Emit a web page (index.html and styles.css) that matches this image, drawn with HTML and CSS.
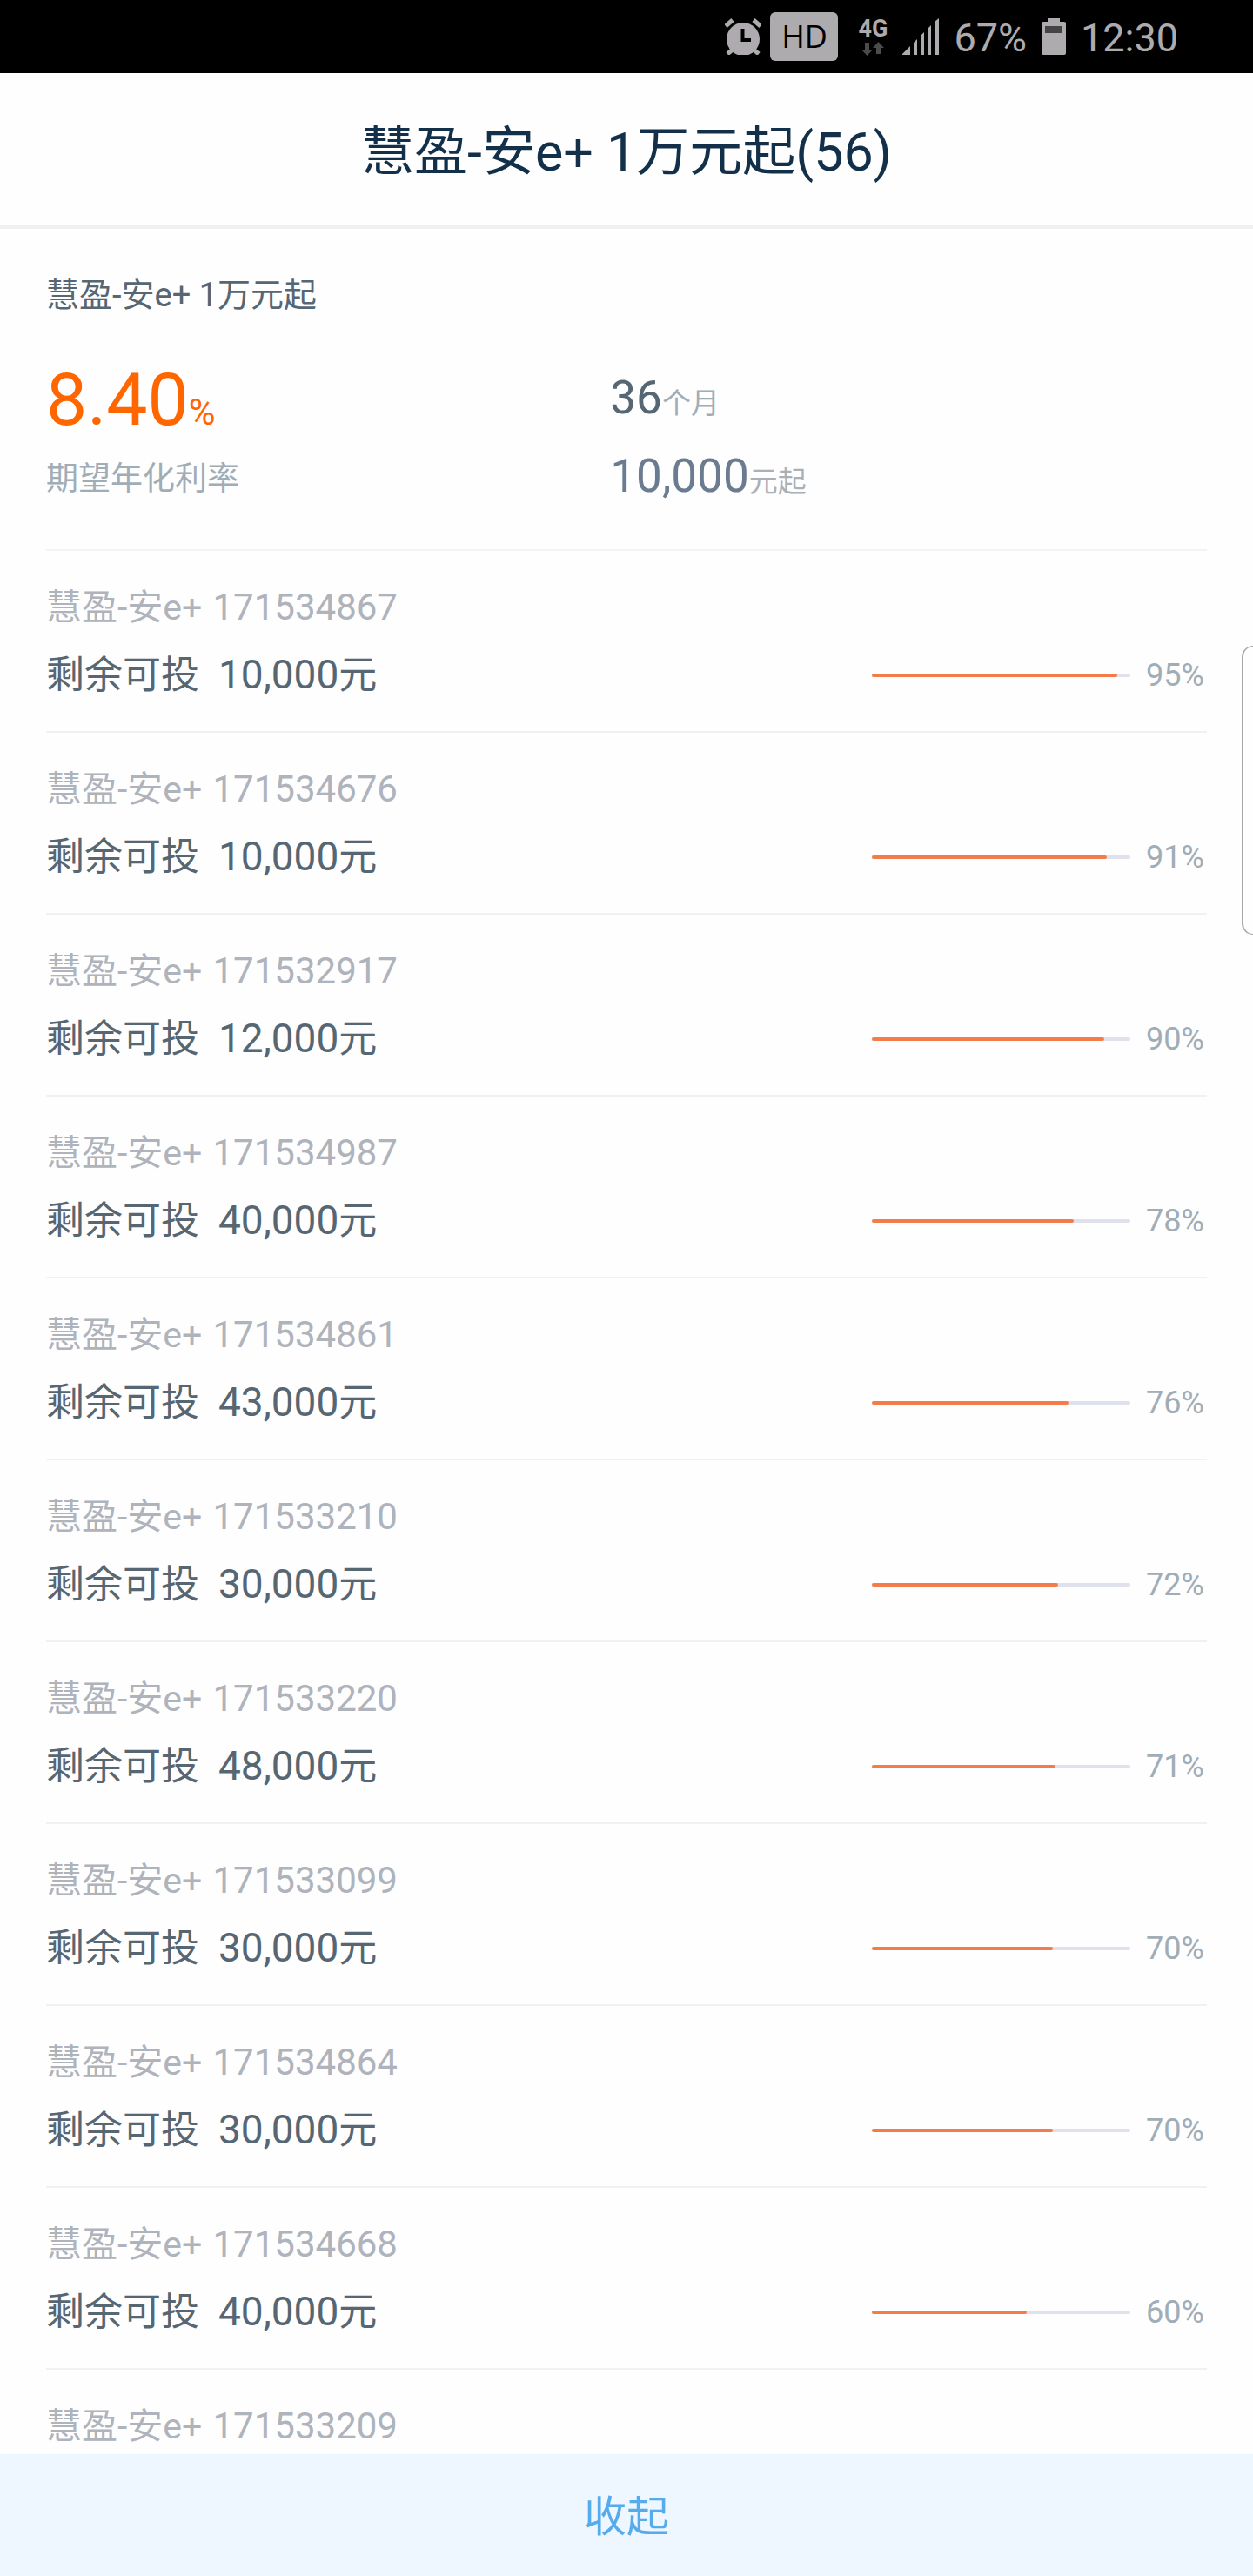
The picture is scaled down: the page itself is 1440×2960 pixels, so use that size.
FILE: index.html
```html
<!DOCTYPE html>
<html lang="zh-CN">
    <head>
        <meta charset="utf-8">
        <meta name="viewport" content="width=device-width, initial-scale=1">
        <title>慧盈-安e+ 1万元起</title>
        <link rel="stylesheet" href="styles.css">
    </head>
    <body>
        <div class="screen">
            <div class="statusbar">
                <div class="status-left">
                    <svg width="42" height="42" viewBox="0 0 42 42">
                        <circle cx="21" cy="24" r="19" fill="#aeabae"/>
                        <path d="M1 9L9 2M41 9L33 2M9 36L3 41M33 36L39 41" stroke="#aeabae" stroke-width="5"/>
                        <path d="M20.500 12V25H30" fill="none" stroke="#000" stroke-width="4"/>
                    </svg>
                    <span class="hd">HD</span>
                </div>
                <div class="network">
                    <span>4G</span>
                    <svg width="26" height="16" viewBox="0 0 26 16">
                        <path d="M4 1H9V9H13L6.500 16L0 9H4Z" fill="#4b4b4b"/>
                        <path d="M17 14H22V7H26L19.500 0L13 7H17Z" fill="#4b4b4b"/>
                    </svg>
                </div>
                <svg width="42" height="42" viewBox="0 0 42 42">
                    <path d="M0 41L9 32V42H0ZM13 28L17 24V42H13ZM21 20L25 16V42H21ZM29 12L33 8V42H29ZM37 4L42 0V42H37Z" fill="#aeabae"/>
                </svg>
                <span class="status-text">67%</span>
                <svg width="28" height="42" viewBox="0 0 28 42">
                    <path d="M7 0H21V4H26Q28 4 28 6V40Q28 42 26 42H2Q0 42 0 40V6Q0 4 2 4H7Z" fill="#aeabae"/>
                    <rect x="4" y="9" width="20" height="8" fill="#444"/>
                </svg>
                <span class="status-text">12:30</span>
            </div>

            <header class="header">
                <h1>慧盈-安e+ 1万元起(56)</h1>
            </header>

            <section class="summary">
                <h2>慧盈-安e+ 1万元起</h2>
                <div class="figures">
                    <div class="rate">
                        <p class="rate-value">8.40<small>%</small></p>
                        <p class="rate-label">期望年化利率</p>
                    </div>
                    <div class="terms">
                        <p class="term">36<small>个月</small></p>
                        <p class="term minimum">10,000<small>元起</small></p>
                    </div>
                </div>
            </section>

            <ul class="list">
                <li class="item">
                    <p class="name">慧盈-安e+ <span class="number">171534867</span></p>
                    <div class="line">
                        <p class="remain">剩余可投<span class="amount">10,000</span>元</p>
                        <div class="bar"><div class="fill" style="width: 95%"></div></div>
                        <span class="percent">95%</span>
                    </div>
                </li>
                <li class="item">
                    <p class="name">慧盈-安e+ <span class="number">171534676</span></p>
                    <div class="line">
                        <p class="remain">剩余可投<span class="amount">10,000</span>元</p>
                        <div class="bar"><div class="fill" style="width: 91%"></div></div>
                        <span class="percent">91%</span>
                    </div>
                </li>
                <li class="item">
                    <p class="name">慧盈-安e+ <span class="number">171532917</span></p>
                    <div class="line">
                        <p class="remain">剩余可投<span class="amount">12,000</span>元</p>
                        <div class="bar"><div class="fill" style="width: 90%"></div></div>
                        <span class="percent">90%</span>
                    </div>
                </li>
                <li class="item">
                    <p class="name">慧盈-安e+ <span class="number">171534987</span></p>
                    <div class="line">
                        <p class="remain">剩余可投<span class="amount">40,000</span>元</p>
                        <div class="bar"><div class="fill" style="width: 78%"></div></div>
                        <span class="percent">78%</span>
                    </div>
                </li>
                <li class="item">
                    <p class="name">慧盈-安e+ <span class="number">171534861</span></p>
                    <div class="line">
                        <p class="remain">剩余可投<span class="amount">43,000</span>元</p>
                        <div class="bar"><div class="fill" style="width: 76%"></div></div>
                        <span class="percent">76%</span>
                    </div>
                </li>
                <li class="item">
                    <p class="name">慧盈-安e+ <span class="number">171533210</span></p>
                    <div class="line">
                        <p class="remain">剩余可投<span class="amount">30,000</span>元</p>
                        <div class="bar"><div class="fill" style="width: 72%"></div></div>
                        <span class="percent">72%</span>
                    </div>
                </li>
                <li class="item">
                    <p class="name">慧盈-安e+ <span class="number">171533220</span></p>
                    <div class="line">
                        <p class="remain">剩余可投<span class="amount">48,000</span>元</p>
                        <div class="bar"><div class="fill" style="width: 71%"></div></div>
                        <span class="percent">71%</span>
                    </div>
                </li>
                <li class="item">
                    <p class="name">慧盈-安e+ <span class="number">171533099</span></p>
                    <div class="line">
                        <p class="remain">剩余可投<span class="amount">30,000</span>元</p>
                        <div class="bar"><div class="fill" style="width: 70%"></div></div>
                        <span class="percent">70%</span>
                    </div>
                </li>
                <li class="item">
                    <p class="name">慧盈-安e+ <span class="number">171534864</span></p>
                    <div class="line">
                        <p class="remain">剩余可投<span class="amount">30,000</span>元</p>
                        <div class="bar"><div class="fill" style="width: 70%"></div></div>
                        <span class="percent">70%</span>
                    </div>
                </li>
                <li class="item">
                    <p class="name">慧盈-安e+ <span class="number">171534668</span></p>
                    <div class="line">
                        <p class="remain">剩余可投<span class="amount">40,000</span>元</p>
                        <div class="bar"><div class="fill" style="width: 60%"></div></div>
                        <span class="percent">60%</span>
                    </div>
                </li>
                <li class="item">
                    <p class="name">慧盈-安e+ <span class="number">171533209</span></p>
                </li>
            </ul>

            <button type="button" class="collapse">收起</button>
            <div class="edge-handle"></div>
        </div>
    </body>
</html>
```
FILE: styles.css
```css
* {
    box-sizing: border-box;
}

body {
    margin: 0;
    background: #fefefe;
    font-family: Roboto, "Noto Sans CJK SC", sans-serif;
    font-weight: 400;
}

h1, h2, p, ul {
    margin: 0;
    padding: 0;
    font-weight: 400;
}

/* keep the mixed sizes from growing the line */
small, .number, .amount {
    line-height: 1;
}

.screen {
    position: relative;
    display: flex;
    flex-direction: column;
    height: 100vh;
    overflow: hidden;
}

/* phone status bar */
.statusbar {
    flex: none;
    display: flex;
    align-items: center;
    justify-content: flex-end;
    gap: 17px;
    height: 84px;
    padding-right: 86px;
    background: #000;
    color: #aeabae;
}

.status-left {
    display: flex;
    align-items: center;
    gap: 10px;
    margin-right: 6px;
}

.hd {
    width: 78px;
    border-radius: 6px;
    background: #aeabae;
    color: #000;
    font-family: "Open Sans", sans-serif;
    font-size: 36px;
    line-height: 56px;
    text-align: center;
}

.network {
    display: flex;
    flex-direction: column;
    align-items: center;
    gap: 3px;
    font-size: 27px;
    font-weight: 700;
    line-height: 24px;
}

.status-text {
    padding-top: 4px;
    font-size: 45px;
    line-height: 56px;
}

/* title */
.header {
    flex: none;
    padding: 50px 53px 43px;
    border-bottom: 4px solid #f0f0f0;
    text-align: center;
}

.header h1 {
    color: #13304a;
    font-size: 61px;
    line-height: 82px;
}

/* product summary */
.summary {
    flex: none;
    margin: 0 53px;
    padding: 51px 0 54px;
    border-bottom: 2px solid #f3f3f5;
}

.summary h2 {
    color: #566673;
    font-size: 38px;
    line-height: 50px;
}

.figures {
    display: flex;
    margin-top: 51px;
}

.rate {
    width: 48.6%;
}

.rate-value {
    color: #ff6600;
    font-size: 84px;
    line-height: 90px;
}

.rate-value small {
    font-size: 42px;
}

.rate-label {
    margin-top: 21px;
    color: #a0adb6;
    font-size: 37px;
    line-height: 50px;
}

.terms {
    display: flex;
    flex-direction: column;
    gap: 30px;
    padding-top: 12px;
}

.term {
    color: #566673;
    font-size: 53px;
    line-height: 60px;
}

.term small {
    color: #a0adb6;
    font-size: 33px;
}

.minimum {
    color: #6b7c90;
}

.minimum small {
    color: #abb0b6;
}

/* loan list */
.list {
    flex: 1;
    min-height: 0;
    overflow: hidden;
    margin: 0 53px;
    list-style: none;
}

.item {
    padding: 35px 0 34px;
    border-bottom: 2px solid #f1f1f5;
}

.name {
    color: #afb3bb;
    font-size: 41px;
    line-height: 60px;
}

.number {
    margin-left: 2px;
    font-size: 42px;
}

.line {
    display: flex;
    align-items: center;
    margin-top: 18px;
}

.remain {
    flex: 1;
    color: #566673;
    font-size: 44px;
    line-height: 60px;
}

.amount {
    margin-left: 22px;
    font-size: 46px;
}

.bar {
    width: 297px;
    height: 4px;
    border-radius: 2px;
    background: #dfe2ec;
}

.fill {
    height: 4px;
    border-radius: 2px;
    background: #f47c4a;
}

.percent {
    width: 88px;
    padding-left: 18px;
    color: #a0adb6;
    font-size: 36px;
    line-height: 60px;
}

.collapse {
    flex: none;
    padding: 38px 0 32px;
    border: 0;
    background: #eef7ff;
    color: #55acec;
    font-family: inherit;
    font-size: 49px;
    line-height: 70px;
}

/* pull-out panel handle, half hidden by the screen edge */
.edge-handle {
    position: absolute;
    top: 742px;
    right: 0;
    width: 13px;
    height: 332px;
    border: 1px solid #a8a8a8;
    border-left-width: 2px;
    border-right: 0;
    border-radius: 13px 0 0 13px;
}
```
